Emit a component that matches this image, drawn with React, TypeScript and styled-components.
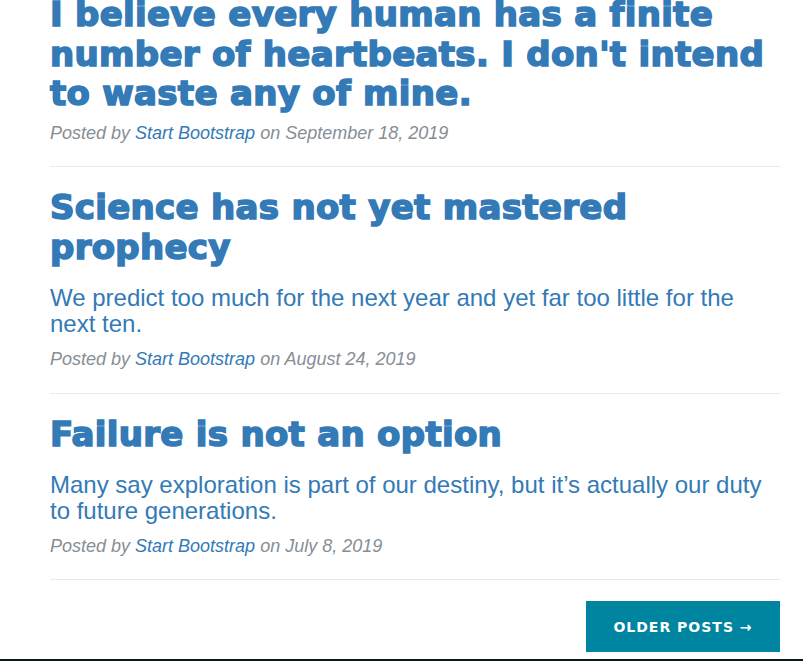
import React from "react";
import styled, { createGlobalStyle } from "styled-components";

const GlobalStyle = createGlobalStyle`
  html, body {
    margin: 0;
    padding: 0;
    background: #ffffff;
    overflow: hidden;
  }
  body {
    font-family: "Liberation Sans", Arial, sans-serif;
    color: #212529;
  }
  * { box-sizing: border-box; }
`;

const Page = styled.div`
  width: 803px;
  height: 661px;
  display: flex;
  flex-direction: column;
  overflow: hidden;
`;

const Column = styled.main`
  width: 730px;
  margin: -5px 0 0 50px;
  display: flex;
  flex-direction: column;
`;

const Preview = styled.article`
  display: block;
`;

const PostLink = styled.a`
  display: block;
  color: #337ab7;
  text-decoration: none;
`;

const Title = styled.h2`
  margin: 0 0 6px;
  font-family: "DejaVu Sans", "Liberation Sans", sans-serif;
  font-weight: 700;
  font-size: 34px;
  line-height: 39.6px;
  letter-spacing: 0.3px;
  color: #337ab7;
  -webkit-text-stroke: 1.6px #337ab7;
`;

const Subtitle = styled.h3`
  margin: 17.6px 0 9px;
  font-family: "Liberation Sans", Arial, sans-serif;
  font-weight: 400;
  font-size: 24px;
  line-height: 26px;
  color: #337ab7;
`;

const Meta = styled.p`
  margin: 0 0 19.5px;
  font-family: "Liberation Sans", Arial, sans-serif;
  font-style: italic;
  font-size: 18px;
  line-height: 27px;
  color: #868e96;
`;

const Author = styled.a`
  color: #337ab7;
  text-decoration: none;
`;

const Divider = styled.hr`
  margin: 0 0 21px;
  border: 0;
  border-top: 1px solid #e9e9e9;
  height: 0;
`;

const Pager = styled.div`
  display: flex;
  justify-content: flex-end;
`;

const OlderButton = styled.a`
  display: inline-flex;
  align-items: center;
  justify-content: center;
  width: 194px;
  height: 51px;
  background: #0085a1;
  color: #ffffff;
  font-family: "DejaVu Sans", "Liberation Sans", sans-serif;
  font-weight: 700;
  font-size: 14px;
  letter-spacing: 1px;
  text-transform: uppercase;
  text-decoration: none;
`;

const BottomBar = styled.div`
  margin-top: auto;
  height: 2px;
  background: #0c1a1f;
  flex-shrink: 0;
`;

type Post = {
  title: string;
  subtitle?: string;
  date: string;
};

const posts: Post[] = [
  {
    title:
      "I believe every human has a finite number of heartbeats. I don't intend to waste any of mine.",
    date: "September 18, 2019",
  },
  {
    title: "Science has not yet mastered prophecy",
    subtitle:
      "We predict too much for the next year and yet far too little for the next ten.",
    date: "August 24, 2019",
  },
  {
    title: "Failure is not an option",
    subtitle:
      "Many say exploration is part of our destiny, but it\u2019s actually our duty to future generations.",
    date: "July 8, 2019",
  },
];

export default function App() {
  return (
    <>
      <GlobalStyle />
      <Page>
        <Column>
          {posts.map((p, i) => (
            <Preview key={i}>
              <PostLink href="#">
                <Title>{p.title}</Title>
                {p.subtitle && <Subtitle>{p.subtitle}</Subtitle>}
              </PostLink>
              <Meta>
                Posted by <Author href="#">Start Bootstrap</Author> on {p.date}
              </Meta>
              <Divider />
            </Preview>
          ))}
          <Pager>
            <OlderButton href="#">Older Posts &rarr;</OlderButton>
          </Pager>
        </Column>
        <BottomBar />
      </Page>
    </>
  );
}
